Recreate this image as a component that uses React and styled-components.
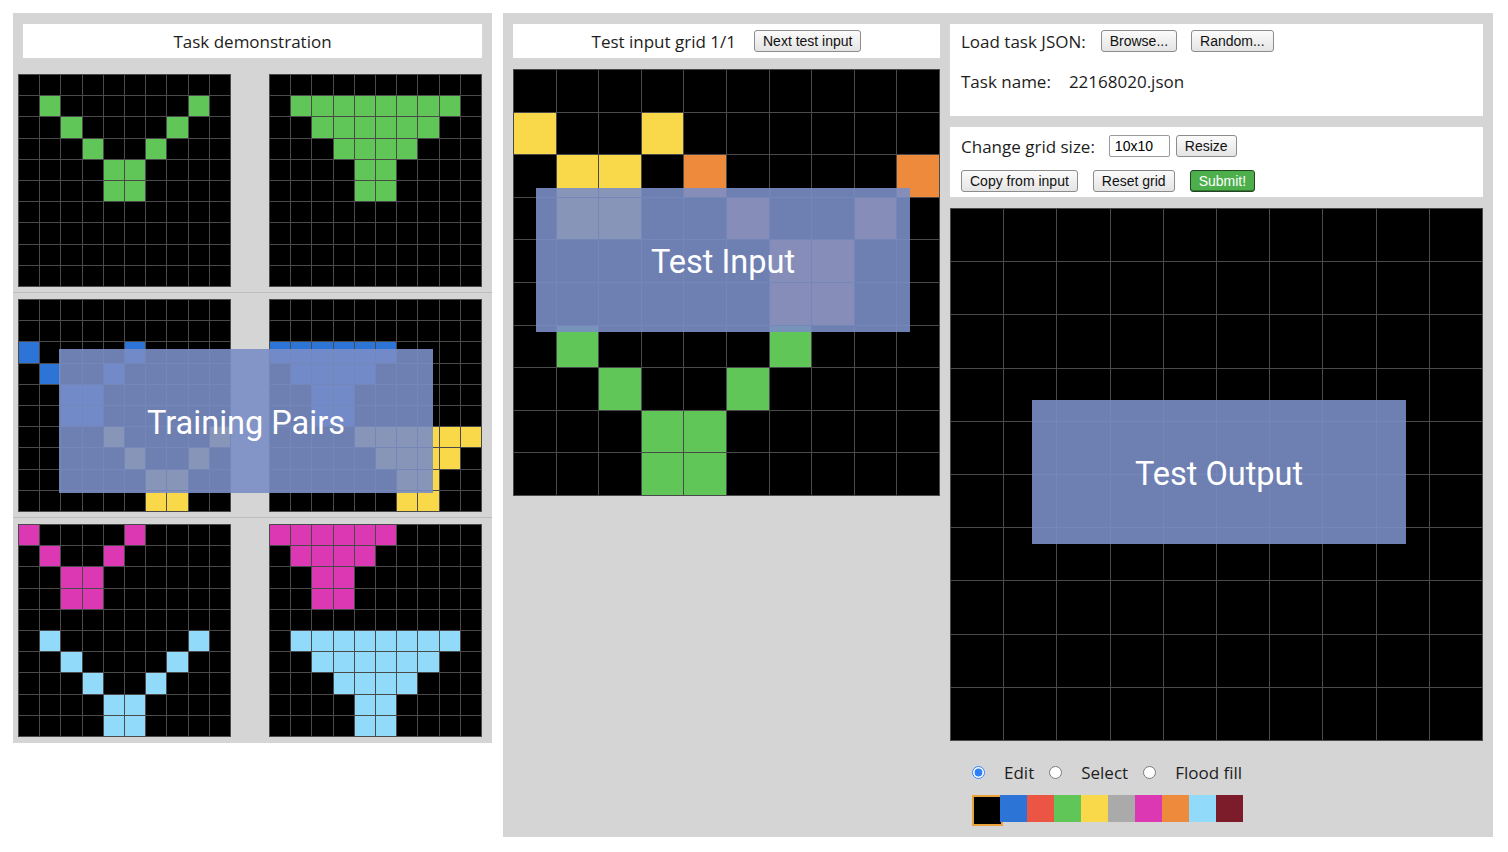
import React from 'react';
import styled, { createGlobalStyle } from 'styled-components';

const GlobalStyle = createGlobalStyle`
	html,
	body {
		margin: 0;
		background: #fff;
	}

	body {
		font-family: "Open Sans", "Liberation Sans", sans-serif;
		color: #1d1d1d;
	}
`;

const colors = [
	'#000000',
	'#2c75d6',
	'#ec5444',
	'#60c658',
	'#f9d94a',
	'#aaaaaa',
	'#dc38b4',
	'#ee8a3c',
	'#92dafa',
	'#7c1c2a'
];

const parse = rows => rows.map(r => r.split('').map(Number));
const empty = () => parse(Array(10).fill('0000000000'));

const pairs = [
	{
		input: parse([
			'0000000000',
			'0300000030',
			'0030000300',
			'0003003000',
			'0000330000',
			'0000330000',
			'0000000000',
			'0000000000',
			'0000000000',
			'0000000000'
		]),
		output: parse([
			'0000000000',
			'0333333330',
			'0033333300',
			'0003333000',
			'0000330000',
			'0000330000',
			'0000000000',
			'0000000000',
			'0000000000',
			'0000000000'
		])
	},
	{
		input: parse([
			'0000000000',
			'0000000000',
			'1000010000',
			'0100100000',
			'0011000000',
			'0011000000',
			'0000400004',
			'0000040040',
			'0000004400',
			'0000004400'
		]),
		output: parse([
			'0000000000',
			'0000000000',
			'1111110000',
			'0111100000',
			'0011000000',
			'0011000000',
			'0000444444',
			'0000044440',
			'0000004400',
			'0000004400'
		])
	},
	{
		input: parse([
			'6000060000',
			'0600600000',
			'0066000000',
			'0066000000',
			'0000000000',
			'0800000080',
			'0080000800',
			'0008008000',
			'0000880000',
			'0000880000'
		]),
		output: parse([
			'6666660000',
			'0666600000',
			'0066000000',
			'0066000000',
			'0000000000',
			'0888888880',
			'0088888800',
			'0008888000',
			'0000880000',
			'0000880000'
		])
	}
];

const testInput = parse([
	'0000000000',
	'4004000000',
	'0440700007',
	'0440070070',
	'0000007700',
	'0000007700',
	'0300003000',
	'0030030000',
	'0003300000',
	'0003300000'
]);

const Page = styled.div`
	display: flex;
	align-items: flex-start;
	gap: 11px;
	padding: 13px;
`;

const DemoPanel = styled.section`
	position: relative;
	width: 479px;
	background: #d5d5d5;
	padding: 11px 0 1px;
`;

const TitleBar = styled.div`
	height: 34px;
	margin: ${props => (props.$inset ? '0 10px' : '0')};
	background: #fff;
	display: flex;
	align-items: center;
	justify-content: center;
	gap: 18px;
	font-size: 17px;
`;

const PairList = styled.div`
	margin-top: 10px;
`;

const Pair = styled.div`
	display: flex;
	justify-content: space-between;
	padding: 6px 10px 5px 5px;
	border-bottom: 1px solid #bdbdbd;

	&:last-child {
		border-bottom: none;
	}
`;

const Grid = styled.div`
	width: ${props => props.$size}px;
	height: ${props => props.$size}px;
	box-sizing: border-box;
	display: grid;
	grid-template-columns: repeat(10, 1fr);
	grid-template-rows: repeat(10, 1fr);
	gap: 1px;
	padding: 1px;
	background: #4a4a4a;
	margin-top: ${props => props.$top || 0}px;
`;

const Cell = styled.div`
	background: ${props => colors[props.$c]};
`;

const Workspace = styled.section`
	width: 990px;
	height: 824px;
	box-sizing: border-box;
	background: #d5d5d5;
	padding: 11px 10px;
	display: flex;
	gap: 10px;
`;

const Column = styled.div`
	position: relative;
	width: ${props => props.$width}px;
	display: flex;
	flex-direction: column;
`;

const Box = styled.div`
	background: #fff;
	box-sizing: border-box;
	height: ${props => props.$height}px;
	margin-bottom: 11px;
	padding: ${props => props.$pad};
	display: flex;
	flex-direction: column;
	gap: ${props => props.$gap}px;
`;

const Row = styled.div`
	display: flex;
	align-items: center;
	height: ${props => props.$h || 22}px;
	font-size: 17px;
`;

const Label = styled.span`
	margin-right: ${props => props.$space}px;
`;

const Button = styled.button`
	font: 14px "Liberation Sans", Arial, sans-serif;
	height: 22px;
	padding: 0 8px;
	margin-right: ${props => props.$space || 0}px;
	color: #111;
	background: linear-gradient(#fbfbfb, #e4e4e4);
	border: 1px solid #8c8c8c;
	border-radius: 3px;
`;

const SubmitButton = styled(Button)`
	color: #fff;
	background: #4caf4c;
	border: 1px solid #244224;
	box-shadow: inset 0 -1px 0 #2f7a2f;
`;

const SizeInput = styled.input`
	width: 61px;
	height: 22px;
	box-sizing: border-box;
	margin-right: 6px;
	padding: 0 5px;
	font: 14px "Liberation Sans", Arial, sans-serif;
	border: 1px solid #9a9a9a;
	border-radius: 2px;
`;

const ModeRow = styled.div`
	display: flex;
	align-items: center;
	height: 20px;
	margin: 21px 0 0 22px;
	font-size: 17px;
`;

const Radio = styled.input`
	width: 13px;
	height: 13px;
	margin: 0 19px 0 0;
	accent-color: #2f7ff6;
`;

const ModeLabel = styled.label`
	margin-right: 15px;
`;

const Swatches = styled.div`
	display: flex;
	align-items: flex-start;
	margin: 13px 0 0 22px;
`;

const Swatch = styled.div`
	width: 27px;
	height: 27px;
	box-sizing: content-box;
	background: ${props => colors[props.$c]};
	border: ${props => (props.$active ? '2px solid #e9a23b' : 'none')};
	margin-right: ${props => (props.$active ? '-3px' : '0')};
`;

const Callout = styled.div`
	position: absolute;
	left: ${props => props.$x}px;
	top: ${props => props.$y}px;
	width: 374px;
	height: 144px;
	box-sizing: border-box;
	padding-top: 4px;
	background: rgba(122, 141, 197, 0.9);
	color: #fff;
	font: 32.5px Roboto, "Open Sans", sans-serif;
	display: flex;
	align-items: center;
	justify-content: center;
	pointer-events: none;
`;

const Board = ({ grid, size, top }) => (
	<Grid $size={size} $top={top}>
		{grid.flat().map((c, i) => (
			<Cell key={i} $c={c} />
		))}
	</Grid>
);

export default function App() {
	return (
		<>
			<GlobalStyle />
			<Page>
				<DemoPanel>
					<TitleBar $inset>Task demonstration</TitleBar>
					<PairList>
						{pairs.map((p, i) => (
							<Pair key={i}>
								<Board grid={p.input} size={213} />
								<Board grid={p.output} size={213} />
							</Pair>
						))}
					</PairList>
					<Callout $x={46} $y={336}>Training Pairs</Callout>
				</DemoPanel>

				<Workspace>
					<Column $width={427}>
						<TitleBar>
							<span>Test input grid 1/1</span>
							<Button>Next test input</Button>
						</TitleBar>
						<Board grid={testInput} size={427} top={11} />
						<Callout $x={23} $y={164}>Test Input</Callout>
					</Column>

					<Column $width={533}>
						<Box $height={92} $pad="5px 11px 0" $gap={16}>
							<Row $h={24}>
								<Label $space={15}>Load task JSON:</Label>
								<Button $space={14}>Browse...</Button>
								<Button>Random...</Button>
							</Row>
							<Row $h={24}>
								<Label $space={18}>Task name:</Label>
								<span>22168020.json</span>
							</Row>
						</Box>
						<Box $height={70} $pad="8px 11px 0" $gap={13}>
							<Row>
								<Label $space={14}>Change grid size:</Label>
								<SizeInput defaultValue="10x10" />
								<Button>Resize</Button>
							</Row>
							<Row>
								<Button $space={15}>Copy from input</Button>
								<Button $space={15}>Reset grid</Button>
								<SubmitButton>Submit!</SubmitButton>
							</Row>
						</Box>
						<Board grid={empty()} size={533} />
						<ModeRow>
							<Radio type="radio" name="mode" id="edit" defaultChecked />
							<ModeLabel htmlFor="edit">Edit</ModeLabel>
							<Radio type="radio" name="mode" id="select" />
							<ModeLabel htmlFor="select">Select</ModeLabel>
							<Radio type="radio" name="mode" id="fill" />
							<ModeLabel htmlFor="fill">Flood fill</ModeLabel>
						</ModeRow>
						<Swatches>
							{colors.map((c, i) => (
								<Swatch key={i} $c={i} $active={i === 0} />
							))}
						</Swatches>
						<Callout $x={82} $y={376}>Test Output</Callout>
					</Column>
				</Workspace>
			</Page>
		</>
	);
}
